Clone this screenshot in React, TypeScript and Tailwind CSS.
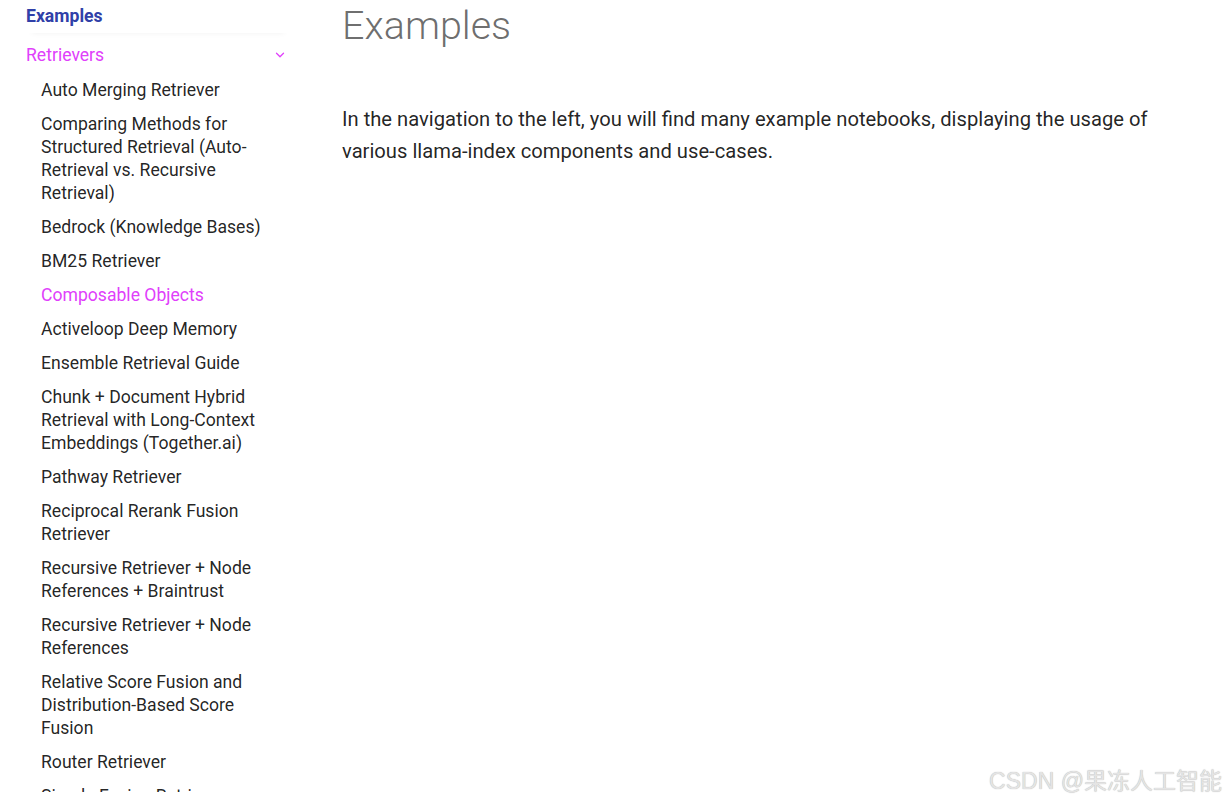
import React from 'react';

const items: { label: string; active?: boolean }[] = [
  { label: 'Auto Merging Retriever' },
  { label: 'Comparing Methods for Structured Retrieval (Auto-Retrieval vs. Recursive Retrieval)' },
  { label: 'Bedrock (Knowledge Bases)' },
  { label: 'BM25 Retriever' },
  { label: 'Composable Objects', active: true },
  { label: 'Activeloop Deep Memory' },
  { label: 'Ensemble Retrieval Guide' },
  { label: 'Chunk + Document Hybrid Retrieval with Long-Context Embeddings (Together.ai)' },
  { label: 'Pathway Retriever' },
  { label: 'Reciprocal Rerank Fusion Retriever' },
  { label: 'Recursive Retriever + Node References + Braintrust' },
  { label: 'Recursive Retriever + Node References' },
  { label: 'Relative Score Fusion and Distribution-Based Score Fusion' },
  { label: 'Router Retriever' },
  { label: 'Simple Fusion Retriever' },
];

export default function App() {
  return (
    <div className="relative flex h-[803px] w-[1225px] overflow-hidden bg-white font-['Roboto',sans-serif]">
      <aside className="h-[792px] w-[310px] shrink-0 overflow-hidden">
        <div className="pl-[26px] pr-[20px]">
          <div className="flex h-[33px] items-center text-[17.6px] font-bold text-[#3040a8] shadow-[0_6px_6px_-6px_rgba(0,0,0,0.06)]">
            Examples
          </div>
          <div className="flex h-[44px] items-center justify-between pr-[3px] text-[17.6px] text-[#e040fb]">
            <span>Retrievers</span>
            <svg width="14" height="14" viewBox="0 0 24 24" fill="none" stroke="currentColor" strokeWidth="2.2" strokeLinecap="round" strokeLinejoin="round">
              <path d="M6 9l6 6 6-6" />
            </svg>
          </div>
          <ul className="mt-[-4px] w-[255px] pl-[15px]">
            {items.map((it) => (
              <li
                key={it.label}
                className={`pt-[6px] pb-[5px] text-[17.6px] leading-[23px] ${it.active ? 'text-[#e040fb]' : 'text-[#000000de]'}`}
              >
                {it.label}
              </li>
            ))}
          </ul>
        </div>
      </aside>
      <main className="pl-[32px] pr-[40px]">
        <h1 className="mt-[1px] text-[39.5px] font-light leading-[50px] text-[#00000096]">Examples</h1>
        <p className="mt-[52px] max-w-[850px] text-[20.2px] leading-[32px] text-[#000000de]">
          In the navigation to the left, you will find many example notebooks, displaying the usage of various llama-index components and use-cases.
        </p>
      </main>
      <div className="absolute bottom-[5px] right-[3px] font-['Liberation_Sans','Noto_Sans_CJK_SC',sans-serif] text-[23px] text-[#e4e4e4] [text-shadow:0_0_1px_#a8a8a8]">
        CSDN @果冻人工智能
      </div>
    </div>
  );
}
